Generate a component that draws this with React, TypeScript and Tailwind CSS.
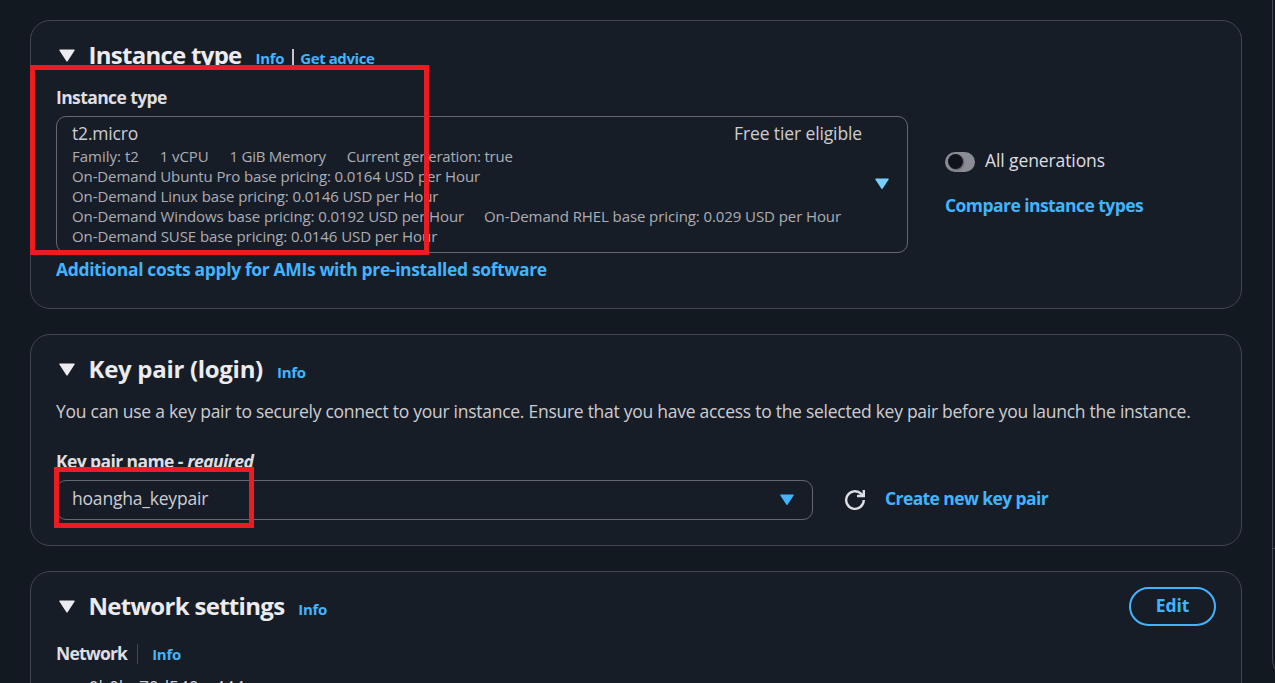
import type { ReactNode } from "react";

function Caret({ className, size }: { className: string; size: number }) {
  return (
    <svg className={className} width={size} height={size * 0.8125} viewBox="0 0 16 13" fill="currentColor" aria-hidden="true">
      <path d="M1 0.5h14a0.7 0.7 0 0 1 .6 1.1L8.6 12.3a0.75 0.75 0 0 1-1.2 0L.4 1.6A0.7 0.7 0 0 1 1 .5Z" />
    </svg>
  );
}

function RefreshIcon() {
  return (
    <svg width="22" height="22" viewBox="0 0 22 22" fill="none" stroke="currentColor" strokeWidth="2.4" aria-hidden="true">
      <path d="M19.8 11A8.8 8.8 0 1 1 17.2 4.8l2 2" />
      <path d="M19.8 1v6H13" />
    </svg>
  );
}

function SectionTitle({ children, tracking }: { children: ReactNode; tracking: string }) {
  return (
    <div className="flex h-[29px] items-center">
      <Caret className="ml-[2.5px] mr-[14px] shrink-0 text-[#ebebf0]" size={16} />
      <h2 className={`-mt-[2px] whitespace-nowrap text-[24px] font-bold leading-[29px] text-[#ebebf0] ${tracking}`}>{children}</h2>
    </div>
  );
}

function Link({ children, className = "" }: { children: ReactNode; className?: string }) {
  return <a className={`whitespace-nowrap font-bold text-[#42b4ff] ${className}`}>{children}</a>;
}

const small = "text-[15px] leading-5 tracking-[-0.29px]";

function Card({ children, className }: { children: ReactNode; className: string }) {
  return <section className={`w-[1212px] shrink-0 rounded-[20px] border border-[#424650] bg-[#171d26] pl-[25px] pr-[25px] ${className}`}>{children}</section>;
}

export default function App() {
  return (
    <div className="relative flex h-[683px] w-[1275px] overflow-hidden bg-[#131920] font-['Open_Sans',sans-serif] text-[17.5px] leading-[25px]">
      <main className="flex flex-col gap-[25px] pl-[30px] pt-5">
        <Card className="h-[289px] pt-5">
          <div className="flex items-center">
            <SectionTitle tracking="tracking-[-0.73px]">Instance type</SectionTitle>
            <div className="ml-[14px] flex items-center pt-[5px]">
              <Link className={small}>Info</Link>
              <span className="-mt-[2px] ml-[8px] mr-[6px] h-[16px] w-[2px] bg-[#c6c6cd]" />
              <Link className="text-[15px] leading-5 tracking-[-0.43px]">Get advice</Link>
            </div>
          </div>
          <label className="mt-[15px] block font-bold tracking-[-0.6px] text-[#dedee3]">Instance type</label>
          <div className="mt-[6px] flex">
            <div className="flex h-[137px] w-[852px] rounded-[10px] border border-[#656871] pl-[15px] pt-1">
              <div className="w-[790px] text-[#cdcdd3]">
                <div className="flex justify-between">
                  <span className="tracking-[-0.18px]">t2.micro</span>
                  <span className="tracking-[-0.12px]">Free tier eligible</span>
                </div>
                <div className="whitespace-nowrap text-[15px] leading-5 tracking-[-0.1px] text-[#adadb5]">
                  <div className="flex gap-[21px]">
                    <span className="tracking-normal">Family: t2</span>
                    <span>1 vCPU</span>
                    <span className="tracking-[-0.25px]">1 GiB Memory</span>
                    <span className="tracking-[-0.2px]">Current generation: true</span>
                  </div>
                  <div className="tracking-[-0.12px]">On-Demand Ubuntu Pro base pricing: 0.0164 USD per Hour</div>
                  <div>On-Demand Linux base pricing: 0.0146 USD per Hour</div>
                  <div className="flex gap-[20px]">
                    <span>On-Demand Windows base pricing: 0.0192 USD per Hour</span>
                    <span className="tracking-[-0.09px]">On-Demand RHEL base pricing: 0.029 USD per Hour</span>
                  </div>
                  <div className="tracking-[-0.08px]">On-Demand SUSE base pricing: 0.0146 USD per Hour</div>
                </div>
              </div>
              <Caret className="ml-[13px] mt-[57px] text-[#75cfff]" size={14} />
            </div>
            <div className="ml-[37px] pt-8">
              <div className="flex items-center gap-[10px]">
                <span className="mt-[2px] flex h-5 w-[30px] items-center rounded-full bg-[#8c8c94] pl-[3px]">
                  <span className="h-[15px] w-[15px] rounded-full bg-[#0f141a] shadow-[1px_1px_2px_rgba(0,0,0,0.35)]" />
                </span>
                <span className="tracking-[-0.1px] text-[#dedee3]">All generations</span>
              </div>
              <Link className="mt-5 block tracking-[-0.56px]">Compare instance types</Link>
            </div>
          </div>
          <Link className="mt-[4px] block tracking-[-0.36px]">Additional costs apply for AMIs with pre-installed software</Link>
        </Card>

        <Card className="h-[212px] pt-5">
          <div className="flex items-center">
            <SectionTitle tracking="tracking-[-0.3px]">Key pair (login)</SectionTitle>
            <Link className={`ml-[14px] pt-[5px] ${small}`}>Info</Link>
          </div>
          <p className="mt-[15px] whitespace-nowrap tracking-[-0.268px] text-[#cdcdd3]">
            You can use a key pair to securely connect to your instance. Ensure that you have access to the selected key pair before you launch the instance.
          </p>
          <label className="mt-[25px] block font-bold tracking-[-0.6px] text-[#dedee3]">
            Key pair name <span className="tracking-normal">-</span> <i>required</i>
          </label>
          <div className="mt-[6px] flex items-center">
            <div className="flex h-10 w-[757px] items-center justify-between rounded-[10px] border border-[#656871] pl-[15px] pr-[18px]">
              <span className="-mt-[3px] tracking-[-0.2px] text-[#cdcdd3]">hoangha_keypair</span>
              <Caret className="text-[#42b4ff]" size={14} />
            </div>
            <span className="ml-[31px] text-[#dedee3]"><RefreshIcon /></span>
            <Link className="-mt-[3px] ml-[19px] tracking-[-0.6px]">Create new key pair</Link>
          </div>
        </Card>

        <Card className="h-[180px] pt-[15px]">
          <div className="flex h-[39px] items-center">
            <SectionTitle tracking="tracking-[-0.7px]">Network settings</SectionTitle>
            <Link className={`ml-[14px] pt-[5px] ${small}`}>Info</Link>
            <button className="ml-auto h-[39px] w-[87px] rounded-full border-2 border-[#42b4ff] pb-[2px] font-bold tracking-[-0.1px] text-[#42b4ff]">Edit</button>
          </div>
          <div className="mt-[15px] flex items-center">
            <span className="font-bold tracking-[-0.8px] text-[#dedee3]">Network</span>
            <span className="ml-[10px] mr-[14px] h-5 w-px bg-[#424650]" />
            <Link className={small}>Info</Link>
          </div>
          <div className="whitespace-nowrap pt-[9px] leading-[25px] tracking-[-0.2px] text-[#cdcdd3]">vpc-0b0be70d540cc444</div>
        </Card>
      </main>

      <aside className="ml-[30px] flex w-[40px] shrink-0 flex-col">
        <div className="h-[549px] border-b border-l border-[#424650]" />
        <div className="h-[130px] rounded-bl-[20px] border-b border-l border-[#424650]" />
      </aside>

      <div className="absolute left-[30px] top-[65px] h-[190px] w-[399px] border-[5px] border-[#ed1c24]" />
      <div className="absolute left-[54px] top-[467px] h-[61px] w-[200px] border-[5px] border-[#ed1c24]" />
    </div>
  );
}
